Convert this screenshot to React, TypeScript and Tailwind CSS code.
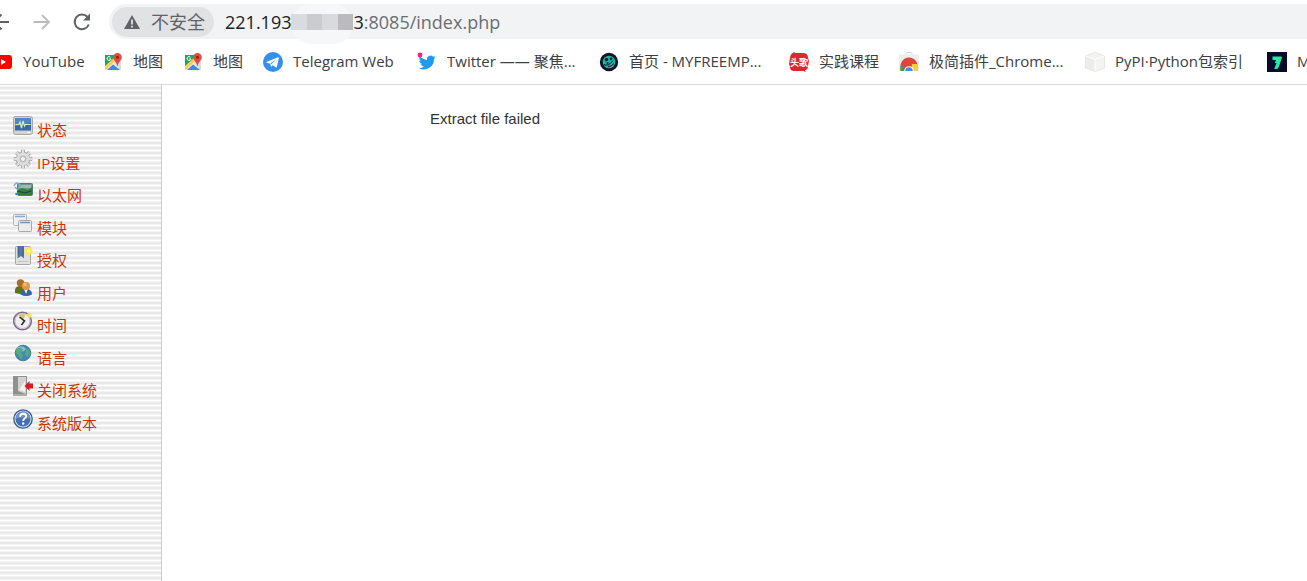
import type { ReactNode } from 'react';

/** 20x20 frame shared by every bookmark and menu icon. */
function Icon({ children }: { children: ReactNode }) {
  return (
    <svg viewBox="0 0 20 20" className="size-5 shrink-0" aria-hidden="true">
      {children}
    </svg>
  );
}

const MAPS_ICON = (
  <Icon>
    <path d="M2 3h12v14H2z" fill="#1fa463" />
    <path d="M2 15 12 6l6 3v9H2z" fill="#e8eaed" />
    <path d="m2 14 9-8 2 2L3 18H2z" fill="#fbd14b" />
    <path d="m4 18 6-5.500 7 5.500z" fill="#4285f4" />
    <path d="M11 11.500 17.500 18H18V9z" fill="#dadce0" />
    <path d="M7.600 5.300A2 2 0 1 0 8 7H6" fill="none" stroke="#fff" />
    <path d="M14.500 1a4.200 4.200 0 0 0-4.200 4.200c0 3.300 3.400 4.600 4.200 9.300.800-4.700 4.200-6 4.200-9.300A4.200 4.200 0 0 0 14.500 1z" fill="#e04a3f" />
    <circle cx="14.500" cy="5.300" r="1.500" fill="#8c1f17" />
  </Icon>
);

const GEAR_TEETH = 'M10 .8v18.400M.8 10h18.400M3.500 3.500l13 13M16.500 3.500l-13 13';

type Bookmark = { label: string; icon: ReactNode; width: string };

const BOOKMARKS: Bookmark[] = [
  {
    label: 'YouTube',
    width: 'w-[110px]',
    icon: (
      <Icon>
        <rect y="3" width="19" height="14" rx="3" fill="#f00" />
        <path d="m8 7 5 3-5 3z" fill="#fff" />
      </Icon>
    ),
  },
  { label: '地图', width: 'w-20', icon: MAPS_ICON },
  { label: '地图', width: 'w-20', icon: MAPS_ICON },
  {
    label: 'Telegram Web',
    width: 'w-[154px]',
    icon: (
      <Icon>
        <circle cx="10" cy="10" r="10" fill="#3390ec" />
        <path d="m3.800 9.700 11.200-4.400c.600-.200 1 .100.800.900l-1.900 8.600c-.1.700-.600.900-1.200.500l-2.800-2.100-1.500 1.400c-.3.200-.6.100-.6-.3l-.5-2.500-3.400-1.100c-.7-.3-.7-.8-.1-1z" fill="#fff" />
        <path d="m8.200 12.200 5-4.700-5.700 3.800z" fill="#3390ec" />
      </Icon>
    ),
  },
  {
    label: 'Twitter —— 聚焦...',
    width: 'w-[182px]',
    icon: (
      <Icon>
        <path d="M18.800 5.300a7 7 0 0 1-2 .6 3.500 3.500 0 0 0 1.500-2 7 7 0 0 1-2.200.8 3.500 3.500 0 0 0-6 3.200A10 10 0 0 1 2.900 4.300a3.500 3.500 0 0 0 1.100 4.700 3.500 3.500 0 0 1-1.600-.4 3.500 3.500 0 0 0 2.800 3.500 3.500 3.500 0 0 1-1.600 0 3.500 3.500 0 0 0 3.300 2.400A7 7 0 0 1 1.800 16 10 10 0 0 0 17 7.100a7 7 0 0 0 1.800-1.800z" fill="#1d9bf0" />
        <circle cx="3" cy="3" r="2.400" fill="#fb1e8a" />
      </Icon>
    ),
  },
  {
    label: '首页 - MYFREEMP...',
    width: 'w-[190px]',
    icon: (
      <Icon>
        <circle cx="10" cy="10" r="9.200" fill="#101626" />
        <circle cx="10" cy="10" r="6.300" fill="#18b5a7" />
        <path d="M5 12.500q4 2.500 9-4M9 14.500q3 .5 6-3" fill="none" stroke="#101626" />
        <circle cx="7.500" cy="7.500" r="1.700" fill="#101626" />
        <circle cx="12" cy="6.800" r="1.300" fill="#101626" />
        <circle cx="8.500" cy="11" r="1.100" fill="#101626" />
      </Icon>
    ),
  },
  {
    label: '实践课程',
    width: 'w-[110px]',
    icon: (
      <Icon>
        <path d="M3 1.500 5 0l1 1h8q5 0 5 5l1 3-1 5q0 3-3 4.500L17 20l-3-1H5q-4 0-4-4l-1-3 1-6q0-3 2-4.500z" fill="#e3242b" />
        <text x="10" y="13.500" textAnchor="middle" fontSize="9" fontWeight="700" fill="#fff">
          头歌
        </text>
      </Icon>
    ),
  },
  {
    label: '极简插件_Chrome...',
    width: 'w-[186px]',
    icon: (
      <Icon>
        <path d="M7 3V1.500Q7 .5 8 .5h4q1 0 1 1V3" fill="none" stroke="#d5d7d9" />
        <path d="M0 2.500h20V18q0 1-1 1H1q-1 0-1-1z" fill="#eceded" />
        <path d="M1.500 19V15A8.500 8.500 0 0 1 18.500 13V19z" fill="#e04537" />
        <path d="M1.500 19v-5l1-2L7 19z" fill="#35a355" />
        <path d="M13 12h5.500l.5 3v4h-7z" fill="#fbcf3b" />
        <path d="M5.200 19a4.800 4.800 0 1 1 9.600 0z" fill="#fff" />
        <path d="M6.300 19a3.700 3.700 0 1 1 7.400 0z" fill="#4688f1" />
      </Icon>
    ),
  },
  {
    label: 'PyPI·Python包索引',
    width: 'w-[182px]',
    icon: (
      <Icon>
        <path d="m10 .5 9.500 3.500v12L10 19.500.5 16V4z" fill="#f3f3f1" stroke="#e6e6e2" />
        <path d="m1 4.300 9 3v11.500l-9-3.300z" fill="#ecece9" />
        <path d="m.5 4 9.500 3.500L19.500 4M10 7.500v12" fill="none" stroke="#fff" />
      </Icon>
    ),
  },
  {
    label: 'M',
    width: 'w-12',
    icon: (
      <Icon>
        <path d="M0 0h20v20H0z" fill="#0a0a2c" />
        <path d="M5.500 4.500H14q1.200 0 .8 1.500l-3 9q-.7 2-2.300 2H7.200l2.300-6H7.800l1.200-3H5.500z" fill="#29e6a2" />
      </Icon>
    ),
  },
];

const MENU: { label: string; icon: ReactNode }[] = [
  {
    label: '状态',
    icon: (
      <Icon>
        <rect x=".5" y=".5" width="19" height="18" rx="2" fill="#d3d3cd" stroke="#a9a9a4" />
        <path d="M2 2h16v12.500H2z" fill="#3767ac" />
        <path d="M2 2h16v5L2 10z" fill="#5584c2" />
        <path d="M2.500 8.500H6l1-2.500 1.500 6 1.500-7 1.500 5 1-1.500h5" fill="none" stroke="#d3efbb" strokeWidth="1.200" />
        <path d="M14 16.500h3" stroke="#f5f5f0" />
      </Icon>
    ),
  },
  {
    label: 'IP设置',
    icon: (
      <Icon>
        <path d={GEAR_TEETH} stroke="#a3a3a3" strokeWidth="4" />
        <circle cx="10" cy="10" r="7.200" fill="#a3a3a3" />
        <path d={GEAR_TEETH} stroke="#dedede" strokeWidth="2.400" />
        <circle cx="10" cy="10" r="6.400" fill="#dedede" />
        <circle cx="10" cy="10" r="3.600" fill="#c4c4c4" />
        <circle cx="10" cy="10" r="2.500" fill="#f6f6f6" stroke="#aaa" strokeWidth=".8" />
      </Icon>
    ),
  },
  {
    label: '以太网',
    icon: (
      <Icon>
        <rect x="4.500" y="2.500" width="15" height="12" rx="1" fill="#719884" stroke="#557a70" />
        <path d="M6 4h12v3H6z" fill="#9bb9be" />
        <path d="M5 9q4-3 7-1t7-2v8H5z" fill="#357c36" />
        <path d="m4 10 8 2 6-2" fill="none" stroke="#174b2e" strokeWidth="1.200" />
        <path d="M.8 5q3-6 7.200 0L5 7M2 6l3 3" fill="none" stroke="#7daebb" strokeWidth="1.400" />
        <circle cx="3.500" cy="13" r="1.300" fill="#3f86c7" />
      </Icon>
    ),
  },
  {
    label: '模块',
    icon: (
      <Icon>
        <rect x=".5" y=".5" width="13" height="11" rx="1" fill="#f0f0f0" stroke="#b4b4b4" />
        <path d="M2 2.500h10" stroke="#8aa9d3" strokeWidth="1.500" />
        <rect x="5.500" y="6.500" width="13" height="11" rx="1" fill="#ececec" stroke="#a8a8a8" />
        <path d="M7 8.500h10" stroke="#6f94c8" strokeWidth="1.500" />
      </Icon>
    ),
  },
  {
    label: '授权',
    icon: (
      <Icon>
        <rect x="2.500" y=".5" width="15" height="18" rx="1" fill="#e0e2df" stroke="#a4a6a3" />
        <path d="M4.500 0h6.500v12.500l-3-2.500-3.500 2.500z" fill="#5676a4" />
        <path d="M5.500 0v9M10 0v10" stroke="#3e5d8b" strokeWidth=".8" />
        <path d="M5 15.500h10" stroke="#bfc4c7" />
        <circle cx="15.500" cy="5" r="4" fill="#f8ed50" />
        <circle cx="15.500" cy="5" r="1.800" fill="#fffb9c" />
      </Icon>
    ),
  },
  {
    label: '用户',
    icon: (
      <Icon>
        <path d="M2 14q-1-7 5-7t6 7l-6 1z" fill="#5e7317" />
        <circle cx="7.500" cy="4" r="3.700" fill="#a96d2c" />
        <path d="M7.500 15.500Q7 10 13 10t6 5.500q-6 3-11.500 0z" fill="#3264a8" />
        <path d="m11 10 2 5 2-5z" fill="#edf2f8" />
        <circle cx="13" cy="7" r="4" fill="#e49545" />
        <circle cx="12" cy="5.500" r="1.800" fill="#f3b879" />
      </Icon>
    ),
  },
  {
    label: '时间',
    icon: (
      <Icon>
        <circle cx="9.500" cy="10" r="8.800" fill="#f2f0ee" stroke="#80678b" strokeWidth="1.600" />
        <circle cx="9.500" cy="10" r="7.500" fill="none" stroke="#c6b8cc" />
        <path d="m9.500 10-4-6q4-2 7 0z" fill="#d8c56c" />
        <path d="m6.500 6 5 4-3 4" fill="none" stroke="#292929" strokeWidth="1.600" />
        <path d="m13 4 2.500-1.500L17 1l.7 2 2.300 1-2 1-.5 2-2-1.500z" fill="#f7e947" />
      </Icon>
    ),
  },
  {
    label: '语言',
    icon: (
      <Icon>
        <circle cx="10" cy="9" r="7.800" fill="#3d89bd" stroke="#376e94" strokeWidth=".8" />
        <ellipse cx="8" cy="5" rx="4.500" ry="2.500" fill="#85bfdc" />
        <path d="m3 5 4-1.500 3 2-2 3 2 3-2 4-3-4-2-3zM12 4l4 1.500 1 5-3 3-2-4 1-3z" fill="#59a878" />
      </Icon>
    ),
  },
  {
    label: '关闭系统',
    icon: (
      <Icon>
        <path d="M0 0h14v19H0z" fill="#8f918e" />
        <path d="M5 1h8v17l-8-3z" fill="#d2d3d0" />
        <path d="M0 18h14v2H0z" fill="#aaaca8" />
        <path d="M6 14 12 5v11z" fill="#f0f0ee" />
        <path d="m11.500 10 5-5v2.500H20v5h-3.500V15z" fill="#d21f25" />
      </Icon>
    ),
  },
  {
    label: '系统版本',
    icon: (
      <Icon>
        <circle cx="10" cy="10" r="9.200" fill="#d9e2ef" stroke="#355b91" strokeWidth="1.300" />
        <circle cx="10" cy="10" r="7.500" fill="#4770ae" />
        <path d="M2.500 10a7.500 7.500 0 0 1 15 0q-8-3-15 0z" fill="#6f92c4" />
        <path d="M7 7.800q.2-3 3.200-3 3 0 3 2.500 0 1.500-1.700 2.400-1.300.7-1.300 2.300" fill="none" stroke="#fff" strokeWidth="1.900" />
        <circle cx="10.200" cy="14.500" r="1.200" fill="#fff" />
      </Icon>
    ),
  },
];

function AddressBar() {
  return (
    <div className="flex h-[35px] items-center">
      <button type="button" aria-label="Back" className="-ml-2.5 size-5">
        <svg viewBox="0 0 20 20" fill="none" stroke="#5f6368" strokeWidth="2">
          <path d="M19 10H4m7.500-7.500L4 10l7.500 7.500" />
        </svg>
      </button>
      <button type="button" aria-label="Forward" className="ml-[22px] size-5">
        <svg viewBox="0 0 20 20" fill="none" stroke="#babcbe" strokeWidth="1.800">
          <path d="M1.500 10h15M10 3l7 7-7 7" />
        </svg>
      </button>
      <button type="button" aria-label="Reload" className="ml-5 size-5">
        <svg viewBox="0 0 20 20" fill="none" stroke="#5f6368" strokeWidth="2">
          <path d="M16.800 12.500A7.300 7.300 0 1 1 15.500 5" />
          <path d="M18 1.500v7h-7z" fill="#5f6368" stroke="none" />
        </svg>
      </button>
      <div className="ml-[17px] flex h-full min-w-0 flex-1 items-center rounded-l-full bg-[#f1f3f4] pl-[3px]">
        <button
          type="button"
          className="flex h-[30px] w-[102px] shrink-0 items-center gap-[11px] rounded-full bg-[#e0e2e4] pl-3 text-lg text-[#5f6368]"
        >
          <svg viewBox="0 0 16 16" className="size-4" fill="#5f6368" aria-hidden="true">
            <path d="M8 1 16 15H0z" />
            <path d="M7.100 5.500h1.800v5H7.100zm0 6.200h1.800v1.700H7.100z" fill="#e0e2e4" />
          </svg>
          不安全
        </button>
        <div className="ml-[11px] flex h-full items-center whitespace-nowrap text-lg text-[#202124]">
          <span>221.193</span>
          {/* Redacted octets. */}
          <span className="relative h-4 w-[62px]">
            <span className="absolute -top-2.5 left-0 h-10 w-[62px] rounded-full bg-[#f6f7f9]" />
            <span className="relative grid h-4 grid-cols-4">
              <span className="bg-[#d9dbe0]" />
              <span className="bg-[#cbccd0]" />
              <span className="bg-[#d8dade]" />
              <span className="bg-[#bbbbbd]" />
            </span>
          </span>
          <span>3</span>
          <span className="text-[#6b6e72]">:8085/index.php</span>
        </div>
      </div>
    </div>
  );
}

export default function App() {
  return (
    <div className="flex min-h-screen flex-col overflow-hidden bg-white font-['Open_Sans','Noto_Sans_CJK_SC',sans-serif]">
      <header className="border-b border-[#d9d9d9] pt-1">
        <AddressBar />
        <nav aria-label="Bookmarks" className="-ml-[7px] flex h-[45px] items-center overflow-hidden">
          {BOOKMARKS.map(({ label, icon, width }, i) => (
            <a
              key={i}
              href="#"
              className={`flex shrink-0 items-center gap-2.5 whitespace-nowrap text-[15px] text-[#3c4043] ${width}`}
            >
              {icon}
              {label}
            </a>
          ))}
        </nav>
      </header>

      <div className="flex flex-1">
        <aside className="w-[162px] shrink-0 border-r border-[#ccc] bg-[repeating-linear-gradient(to_bottom,#fff_0px_1px,#f3f3f3_1px_2px,#e9e9e9_2px_4px,#f3f3f3_4px_5px)] pt-[31px] pl-[13px]">
          <ul className="grid h-[325px] auto-rows-fr">
            {MENU.map(({ label, icon }) => (
              <li key={label}>
                <a href="#" className="flex gap-1 text-[15px] leading-5 text-[#c30]">
                  {icon}
                  <span className="pt-1">{label}</span>
                </a>
              </li>
            ))}
          </ul>
        </aside>
        <main className="flex-1 pt-6 pl-[268px] font-['Liberation_Sans',Arial,sans-serif] text-[15px] leading-5 text-[#333]">
          Extract file failed
        </main>
      </div>
    </div>
  );
}
